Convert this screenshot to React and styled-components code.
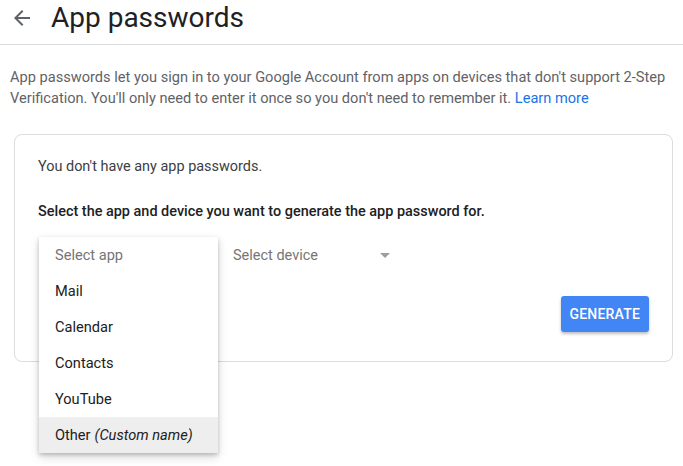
import React from 'react';
import styled, { createGlobalStyle } from 'styled-components';

const GlobalStyle = createGlobalStyle`
  html, body {
    height: 100%;
  }
  body {
    margin: 0;
    background: #fff;
    font-family: Roboto, "Liberation Sans", Arial, sans-serif;
    color: #202124;
  }
  #root {
    min-height: 100vh;
  }
`;

const Header = styled.header`
  display: flex;
  align-items: center;
  height: 44px;
  border-bottom: 1px solid #dadce0;
  padding-left: 10px;
`;

const BackButton = styled.button`
  display: flex;
  align-items: center;
  justify-content: center;
  width: 24px;
  height: 24px;
  padding: 0;
  margin-top: -9px;
  border: none;
  background: none;
  color: #5f6368;
  cursor: pointer;
`;

const Title = styled.h1`
  margin: -9px 0 0 17px;
  font-size: 28px;
  font-weight: 400;
  color: #202124;
`;

const Main = styled.main`
  padding: 0 10px;
`;

const Intro = styled.p`
  margin: 22px 0 0;
  font-size: 14.6px;
  line-height: 21px;
  color: #5f6368;
`;

const Link = styled.a`
  color: #1a73e8;
  text-decoration: none;
`;

const Card = styled.section`
  margin: 25px 0 0 4px;
  border: 1px solid #dadce0;
  border-radius: 8px;
  padding: 22px 23px 29px 23px;
`;

const Text = styled.p`
  margin: ${p => p.$top || 0}px 0 0;
  font-size: 14.45px;
  line-height: 20px;
  font-weight: ${p => (p.$strong ? 500 : 400)};
  color: ${p => (p.$strong ? '#202124' : '#3c4043')};
`;

const SelectRow = styled.div`
  display: flex;
  align-items: center;
  margin-top: 15px;
  height: 36px;
`;

const SelectBox = styled.div`
  position: relative;
  display: flex;
  align-items: center;
  justify-content: space-between;
  width: ${p => p.$width}px;
  margin-left: ${p => p.$left || 0}px;
  height: 36px;
  font-size: 14.5px;
  color: #757575;
`;

const Caret = styled.span`
  width: 0;
  height: 0;
  border-left: 5px solid transparent;
  border-right: 5px solid transparent;
  border-top: 5px solid #9e9e9e;
  margin-right: 1px;
`;

const Menu = styled.ul`
  position: absolute;
  top: 0;
  left: 0;
  width: 179px;
  margin: 0;
  padding: 0;
  list-style: none;
  background: #fff;
  box-shadow: 0 2px 4px rgba(0, 0, 0, 0.2), 0 4px 10px rgba(0, 0, 0, 0.14);
  z-index: 2;
`;

const MenuItem = styled.li`
  display: flex;
  align-items: center;
  height: 36px;
  padding: 0 16px;
  font-size: 14.6px;
  color: ${p => (p.$placeholder ? '#757575' : '#212121')};
  background: ${p => (p.$active ? '#eeeeee' : 'transparent')};

  em {
    margin-left: 4px;
  }
`;

const Actions = styled.div`
  display: flex;
  justify-content: flex-end;
  margin-top: 23px;
`;

const GenerateButton = styled.button`
  height: 36px;
  padding: 0 9px 0 8px;
  border: none;
  border-radius: 3px;
  background: #4285f4;
  color: #fff;
  font-family: inherit;
  font-size: 14px;
  font-weight: 500;
  letter-spacing: 0.2px;
  box-shadow: 0 2px 3px rgba(0, 0, 0, 0.25);
  cursor: pointer;
`;

const apps = ['Mail', 'Calendar', 'Contacts', 'YouTube'];

export default function App() {
  return (
    <>
      <GlobalStyle />
      <Header>
        <BackButton aria-label="Back">
          <svg width="24" height="24" viewBox="0 0 24 24" fill="currentColor">
            <path d="M20 11H7.83l5.59-5.59L12 4l-8 8 8 8 1.41-1.41L7.83 13H20v-2z" />
          </svg>
        </BackButton>
        <Title>App passwords</Title>
      </Header>
      <Main>
        <Intro>
          App passwords let you sign in to your Google Account from apps on devices that don't support 2-Step
          Verification. You'll only need to enter it once so you don't need to remember it.{' '}
          <Link href="#">Learn more</Link>
        </Intro>
        <Card>
          <Text>You don't have any app passwords.</Text>
          <Text $top={25} $strong>
            Select the app and device you want to generate the app password for.
          </Text>
          <SelectRow>
            <SelectBox $width={179} $left={1}>
              <Menu>
                <MenuItem $placeholder>Select app</MenuItem>
                {apps.map(a => (
                  <MenuItem key={a}>{a}</MenuItem>
                ))}
                <MenuItem $active>
                  Other <em>(Custom name)</em>
                </MenuItem>
              </Menu>
            </SelectBox>
            <SelectBox $width={158} $left={15}>
              Select device
              <Caret />
            </SelectBox>
          </SelectRow>
          <Actions>
            <GenerateButton>GENERATE</GenerateButton>
          </Actions>
        </Card>
      </Main>
    </>
  );
}
